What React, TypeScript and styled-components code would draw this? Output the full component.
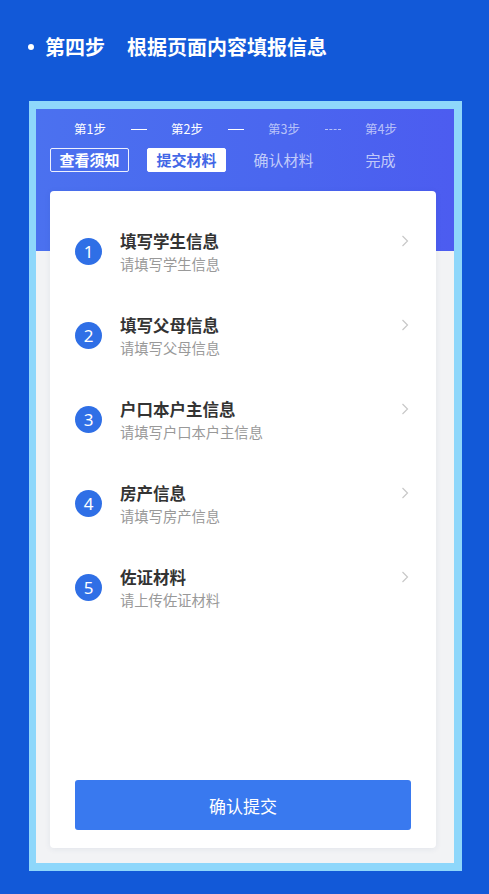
import styled, { createGlobalStyle } from "styled-components";

const GlobalStyle = createGlobalStyle`
  html, body {
    margin: 0;
    padding: 0;
    background: #1259d8;
  }
  body {
    font-family: "Noto Sans CJK SC", "Noto Sans", sans-serif;
  }
`;

const Page = styled.div`
  width: 489px;
  height: 894px;
  background: #1259d8;
  padding-top: 33px;
  box-sizing: border-box;
  overflow: hidden;
`;

const Title = styled.h1`
  display: flex;
  align-items: center;
  margin: 0 0 40px 28px;
  height: 28px;
  font-size: 20px;
  line-height: 28px;
  font-weight: 700;
  color: #ffffff;

  &::before {
    content: "";
    width: 6px;
    height: 6px;
    border-radius: 50%;
    background: #ffffff;
    margin-right: 11px;
  }
`;

const TitleGap = styled.span`
  display: inline-block;
  width: 22px;
`;

const Frame = styled.div`
  margin-left: 29px;
  width: 433px;
  height: 770px;
  box-sizing: border-box;
  border: 8px solid #8ed7fb;
  border-left-width: 7px;
  background: #f2f3f5;
`;

const Screen = styled.div`
  height: 100%;
  display: flex;
  flex-direction: column;
  background:
    radial-gradient(ellipse 120px 60px at 310px 150px, rgba(255, 255, 255, 0.06), transparent 70%),
    radial-gradient(ellipse 160px 70px at 120px 130px, rgba(255, 255, 255, 0.05), transparent 70%),
    linear-gradient(90deg, #4b71ef 0%, #4a66ef 60%, #4c5cf0 100%) top / 100% 142px no-repeat,
    #f2f3f5;
`;

const StepsRow = styled.div`
  display: grid;
  grid-template-columns: repeat(3, 74px 23px) 74px;
  align-items: center;
  justify-items: center;
  padding: 12px 0 0 17px;
  font-size: 12.5px;
  line-height: 16px;
`;

const StepText = styled.span<{ $muted?: boolean }>`
  color: ${(p) => (p.$muted ? "rgba(255, 255, 255, 0.62)" : "#ffffff")};
`;

const Connector = styled.span<{ $dashed?: boolean }>`
  width: 16px;
  height: 0;
  border-top: ${(p) =>
    p.$dashed ? "1px dashed rgba(255, 255, 255, 0.6)" : "1.5px solid #ffffff"};
`;

const LabelsRow = styled.div`
  display: grid;
  grid-template-columns: repeat(4, 97px);
  padding: 11px 0 0 5px;
  justify-items: center;
`;

const Label = styled.span<{ $variant: "outline" | "active" | "muted" }>`
  box-sizing: border-box;
  height: 24px;
  padding: 0 8px;
  font-size: 15px;
  line-height: 22px;
  border-radius: 2px;
  font-weight: ${(p) => (p.$variant === "muted" ? 400 : 700)};
  color: ${(p) =>
    p.$variant === "active"
      ? "#4267e6"
      : p.$variant === "muted"
        ? "rgba(255, 255, 255, 0.68)"
        : "#ffffff"};
  background: ${(p) => (p.$variant === "active" ? "#ffffff" : "transparent")};
  border: 1px solid
    ${(p) =>
      p.$variant === "outline"
        ? "rgba(255, 255, 255, 0.9)"
        : p.$variant === "active"
          ? "#ffffff"
          : "transparent"};
`;

const Card = styled.div`
  flex: 1;
  margin: 19px 18px 15px 14px;
  background: #ffffff;
  border-radius: 4px;
  box-shadow: 0 1px 6px rgba(40, 60, 120, 0.08);
  display: flex;
  flex-direction: column;
  padding: 39px 25px 18px;
`;

const List = styled.div`
  display: flex;
  flex-direction: column;
  gap: 40px;
  flex: 1;
`;

const Item = styled.div`
  display: flex;
  align-items: flex-start;
`;

const Num = styled.span`
  width: 27px;
  height: 27px;
  margin-top: 8px;
  border-radius: 50%;
  background: #2f6fe6;
  color: #ffffff;
  font-family: "Noto Sans", sans-serif;
  font-size: 17px;
  line-height: 27px;
  text-align: center;
  flex-shrink: 0;
`;

const ItemText = styled.div`
  flex: 1;
  margin-left: 18px;
`;

const ItemTitle = styled.div`
  font-size: 16.5px;
  line-height: 22px;
  font-weight: 700;
  color: #333333;
`;

const ItemSub = styled.div`
  margin-top: 2px;
  font-size: 14.3px;
  line-height: 20px;
  color: #999999;
`;

const Chevron = styled.svg`
  width: 8px;
  height: 12px;
  margin: 5px 2px 0 0;
  flex-shrink: 0;
`;

const Submit = styled.button`
  height: 50px;
  border: none;
  border-radius: 3px;
  background: #3979ef;
  color: #ffffff;
  font-family: inherit;
  font-size: 17px;
  cursor: pointer;
`;

const steps = [
  { n: 1, title: "填写学生信息", sub: "请填写学生信息" },
  { n: 2, title: "填写父母信息", sub: "请填写父母信息" },
  { n: 3, title: "户口本户主信息", sub: "请填写户口本户主信息" },
  { n: 4, title: "房产信息", sub: "请填写房产信息" },
  { n: 5, title: "佐证材料", sub: "请上传佐证材料" },
];

export default function App() {
  return (
    <Page>
      <GlobalStyle />
      <Title>
        第四步
        <TitleGap />
        根据页面内容填报信息
      </Title>
      <Frame>
        <Screen>
          <StepsRow>
            <StepText>第1步</StepText>
            <Connector />
            <StepText>第2步</StepText>
            <Connector />
            <StepText $muted>第3步</StepText>
            <Connector $dashed />
            <StepText $muted>第4步</StepText>
          </StepsRow>
          <LabelsRow>
            <Label $variant="outline">查看须知</Label>
            <Label $variant="active">提交材料</Label>
            <Label $variant="muted">确认材料</Label>
            <Label $variant="muted">完成</Label>
          </LabelsRow>
          <Card>
            <List>
              {steps.map((s) => (
                <Item key={s.n}>
                  <Num>{s.n}</Num>
                  <ItemText>
                    <ItemTitle>{s.title}</ItemTitle>
                    <ItemSub>{s.sub}</ItemSub>
                  </ItemText>
                  <Chevron viewBox="0 0 8 12">
                    <path d="M1.5 1 L6.5 6 L1.5 11" fill="none" stroke="#c8c8c8" strokeWidth="1.2" />
                  </Chevron>
                </Item>
              ))}
            </List>
            <Submit>确认提交</Submit>
          </Card>
        </Screen>
      </Frame>
    </Page>
  );
}
